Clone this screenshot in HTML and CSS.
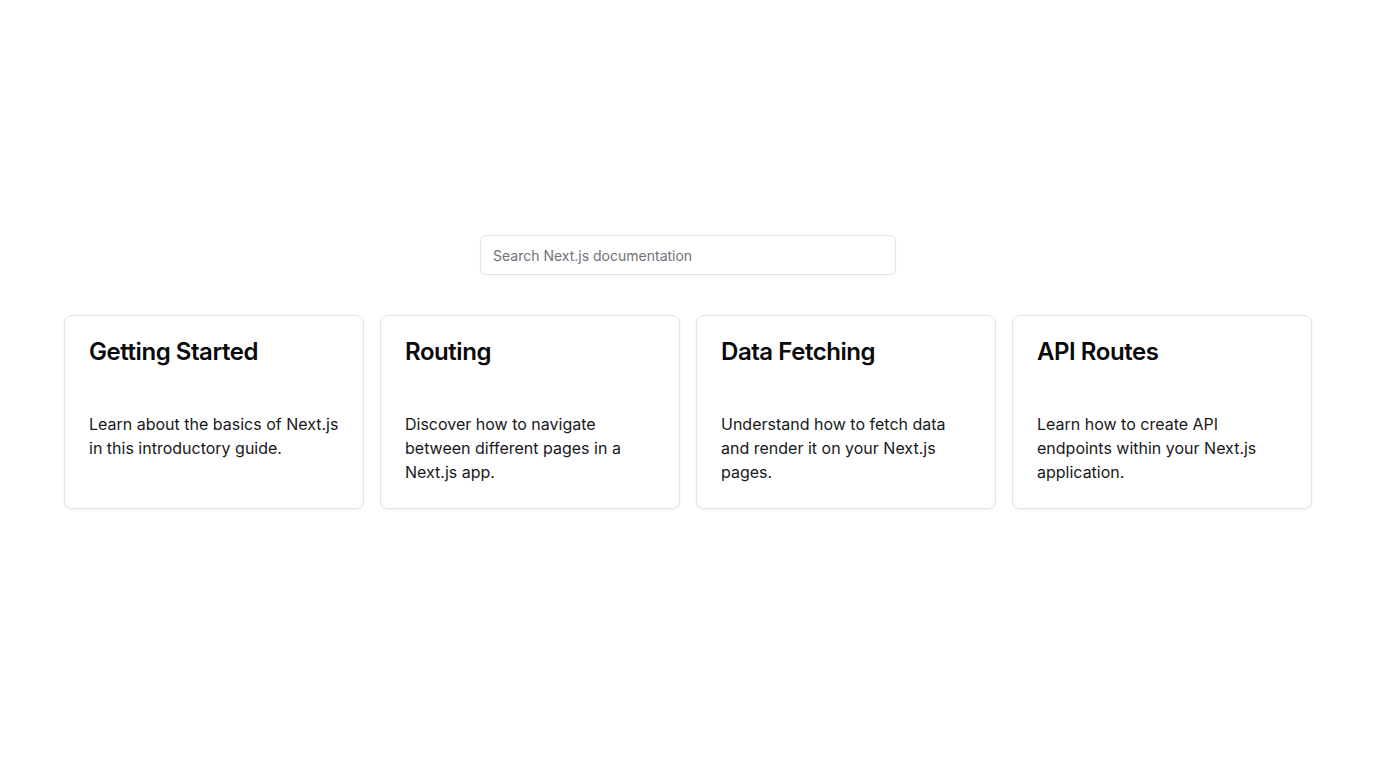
FILE: index.html
```html
<!DOCTYPE html>
<html lang="en">
<head>
<meta charset="utf-8">
<title>Next.js Docs</title>
<link rel="stylesheet" href="styles.css">
</head>
<body>
<main class="page">
  <input class="search" type="text" placeholder="Search Next.js documentation">
  <div class="cards">
    <div class="card">
      <h2 class="card-title">Getting Started</h2>
      <p class="card-text">Learn about the basics of Next.js in this introductory guide.</p>
    </div>
    <div class="card">
      <h2 class="card-title">Routing</h2>
      <p class="card-text">Discover how to navigate between different pages in a Next.js app.</p>
    </div>
    <div class="card">
      <h2 class="card-title">Data Fetching</h2>
      <p class="card-text">Understand how to fetch data and render it on your Next.js pages.</p>
    </div>
    <div class="card">
      <h2 class="card-title">API Routes</h2>
      <p class="card-text">Learn how to create API endpoints within your Next.js application.</p>
    </div>
  </div>
</main>
</body>
</html>
```

FILE: styles.css
```css
* { box-sizing: border-box; }
html, body { margin: 0; padding: 0; background: #ffffff; }
body {
  font-family: Inter, "Noto Sans", sans-serif;
  color: #111111;
}
.page {
  min-height: 768px;
  display: flex;
  flex-direction: column;
  align-items: center;
  padding-top: 235px;
}
.search {
  width: 416px;
  height: 40px;
  padding: 0 12px;
  border: 1px solid #e4e4e7;
  border-radius: 6px;
  font-family: inherit;
  font-size: 14px;
  color: #111;
  background: #fff;
  outline: none;
  box-shadow: 0 1px 2px rgba(0,0,0,0.04);
}
.search::placeholder { color: #71717a; }
.cards {
  margin-top: 40px;
  display: grid;
  grid-template-columns: repeat(4, 300px);
  gap: 16px;
}
.card {
  border: 1px solid #e4e4e7;
  border-radius: 8px;
  padding: 24px;
  background: #fff;
  box-shadow: 0 1px 3px rgba(0,0,0,0.06);
}
.card-title {
  margin: 0;
  font-size: 24px;
  line-height: 24px;
  font-weight: 600;
  letter-spacing: -0.45px;
  color: #09090b;
}
.card-text {
  margin: 48px 0 0;
  font-size: 16px;
  line-height: 24px;
  color: #18181b;
}
```
